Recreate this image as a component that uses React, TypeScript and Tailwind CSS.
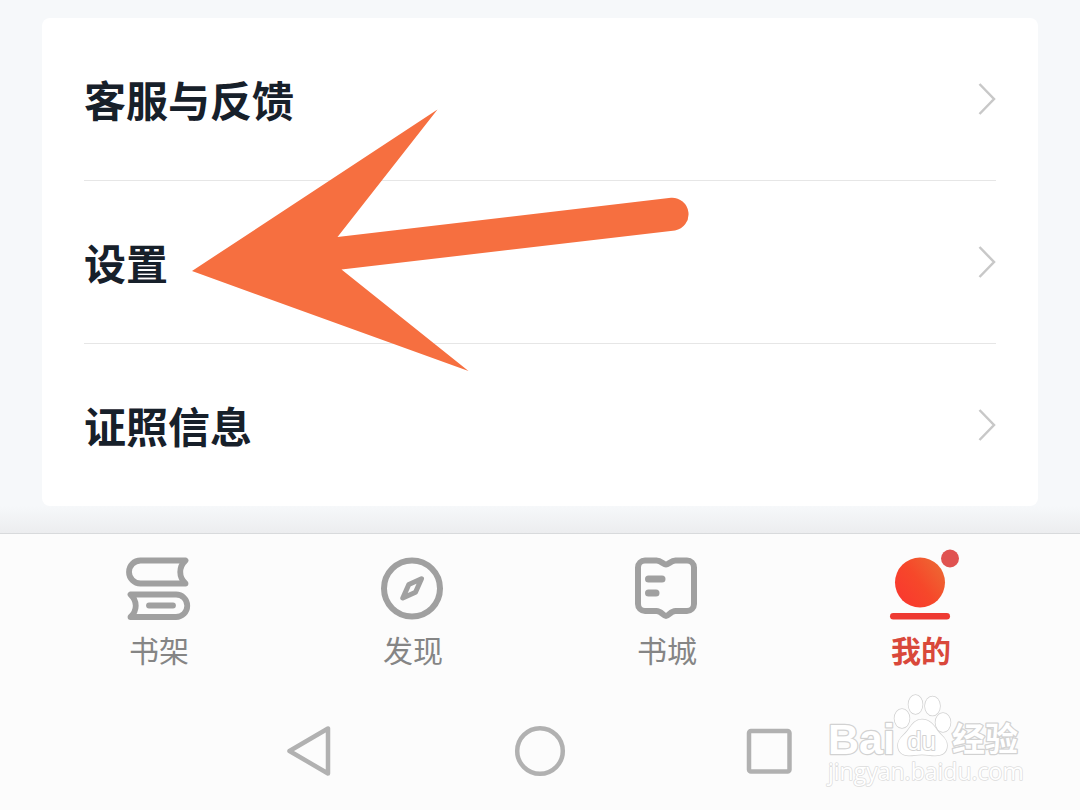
import type { ReactNode } from "react";

const menuItems = ["客服与反馈", "设置", "证照信息"];

const ShelfIcon = () => (
  <svg viewBox="0 0 96 76" className="w-24 h-[76px]" fill="none" stroke="#a0a0a0" strokeWidth="5.8" strokeLinejoin="round" strokeLinecap="round" aria-hidden="true">
    <path d="M74.5 14.5H29.5a11.5 11.5 0 0 0 0 23h45c-7-6.5-7-16.5 0-23Z" />
    <path d="M19.5 48.500h45.500a11.250 11.250 0 0 1 0 22.500h-45.500c7-6.500 7-16 0-22.500Z" />
    <path d="M38 59.500h24" />
  </svg>
);

const CompassIcon = () => (
  <svg viewBox="0 0 96 76" className="w-24 h-[76px]" fill="none" stroke="#a0a0a0" strokeLinejoin="round" aria-hidden="true">
    <circle cx="47" cy="42.5" r="28" strokeWidth="6" />
    <path d="M56.5 32.800 43.800 38.500 37.800 52 50.500 46.300Z" strokeWidth="5" />
  </svg>
);

const StoreIcon = () => (
  <svg viewBox="0 0 96 76" className="w-24 h-[76px]" fill="none" stroke="#a0a0a0" strokeWidth="6" strokeLinejoin="round" strokeLinecap="round" aria-hidden="true">
    <path d="M26 14.5h11.5c4.500 0 7 4 9.500 4s5-4 9.500-4H68a7 7 0 0 1 7 7V58a7 7 0 0 1-7 7H56.500c-4.500 0-7 5-9.500 5s-5-5-9.500-5H26a7 7 0 0 1-7-7V21.500a7 7 0 0 1 7-7Z" />
    <path d="M29.5 33H43M29.5 47h7.500" strokeWidth="7" />
  </svg>
);

const MineIcon = () => (
  <svg viewBox="0 0 96 76" className="w-24 h-[76px]" aria-hidden="true">
    <defs>
      <linearGradient id="ball" x1="0.1" y1="0.8" x2="0.9" y2="0.2">
        <stop offset="0" stopColor="#f93a2e" />
        <stop offset="0.5" stopColor="#f6482a" />
        <stop offset="1" stopColor="#ee6432" />
      </linearGradient>
    </defs>
    <circle cx="47" cy="36.5" r="25" fill="url(#ball)" />
    <rect x="17" y="67" width="60" height="6.5" rx="3.250" fill="#ee3a32" />
    <circle cx="77" cy="12.5" r="9" fill="#e05250" />
  </svg>
);

const tabs: { label: string; icon: ReactNode; active?: boolean }[] = [
  { label: "书架", icon: <ShelfIcon /> },
  { label: "发现", icon: <CompassIcon /> },
  { label: "书城", icon: <StoreIcon /> },
  { label: "我的", icon: <MineIcon />, active: true },
];

const Arrow = () => (
  <svg viewBox="192 109 498 263" className="absolute left-[150px] top-[91px] w-[498px] h-[263px] pointer-events-none" aria-hidden="true">
    <path
      d="M192 271 437.5 109.5 337.5 237 671 197.8A16.500 16.500 0 0 1 675 230.5L341.5 269.5 468.5 371Z"
      fill="#f66f40"
    />
  </svg>
);

const Watermark = () => (
  <svg
    viewBox="820 690 210 100"
    className="absolute right-[50px] bottom-5 w-[210px] h-[100px] pointer-events-none"
    fill="#ffffff"
    stroke="#d2d2d2"
    strokeWidth="2.5"
    paintOrder="stroke"
    strokeLinejoin="round"
    aria-hidden="true"
  >
    <text x="828" y="754" fontSize="43" fontWeight="700" fontFamily="'Liberation Sans', sans-serif">Bai</text>
    <g strokeWidth="1.5">
      <ellipse cx="902" cy="718.5" rx="7.5" ry="9.5" />
      <ellipse cx="915.5" cy="704.5" rx="7" ry="9.5" />
      <ellipse cx="932.5" cy="706" rx="7.5" ry="9.5" />
      <ellipse cx="943" cy="722.5" rx="7.5" ry="9.5" />
      <path d="M922 719.500c8 0 12 6 16 12 4 5 9 7 9 14s-5 10-12 10c-5 0-8-1-13-1s-8 1-13 1c-7 0-11-4-11-10 0-7 5-9 9-14s7-12 15-12Z" />
    </g>
    <text x="907" y="750" fontSize="26" strokeWidth="2" fontFamily="'Liberation Sans', sans-serif">du</text>
    <text x="952" y="751" fontSize="33" fontWeight="700" fontFamily="'Noto Sans CJK SC', sans-serif">经验</text>
    <text x="828" y="780" fontSize="23" strokeWidth="1.5" stroke="#dcdcdc" fontFamily="'Open Sans', sans-serif">jingyan.baidu.com</text>
  </svg>
);

export default function App() {
  return (
    <div className="min-h-screen flex flex-col bg-[#f6f8fa] font-['Noto_Sans_CJK_SC',sans-serif]">
      <main className="flex-1 flex flex-col pt-[18px]">
        <div className="relative mx-[42px] px-[42px] rounded-lg bg-white">
          {menuItems.map((item) => (
            <button
              key={item}
              type="button"
              className="flex w-full h-[163px] items-center justify-between border-b border-[#e6e6e6] last-of-type:h-[162px] last-of-type:border-b-0 text-left"
            >
              <span className="text-[42px] leading-[60px] font-bold text-[#17202a]">{item}</span>
              <svg viewBox="0 0 18 34" className="w-[18px] h-[34px]" fill="none" stroke="#c8c8c8" strokeWidth="2.5" aria-hidden="true">
                <path d="M1.5 2 16 17 1.5 32" />
              </svg>
            </button>
          ))}
          <Arrow />
        </div>
        <div className="flex-1 min-h-6 bg-linear-to-b from-[#f6f8fa] to-[#ecedef]" />
      </main>

      <footer className="relative border-t border-[#d8dadc] bg-[#fcfcfc]">
        <nav className="grid grid-cols-4 px-8 pt-3">
          {tabs.map((tab) => (
            <a key={tab.label} href="#" className="flex flex-col items-center gap-[7px]">
              {tab.icon}
              <span className={tab.active ? "text-[30px] leading-10 font-bold text-[#d9483b]" : "text-[30px] leading-10 text-[#858585]"}>
                {tab.label}
              </span>
            </a>
          ))}
        </nav>

        <div className="flex justify-center gap-44 pt-[55px] pb-8">
          <button type="button" aria-label="返回">
            <svg viewBox="0 0 54 54" className="w-[54px] h-[54px]" fill="none" stroke="#b1b1b1" strokeWidth="4.5" strokeLinejoin="round">
              <path d="M6.5 27 45 4.500v45Z" />
            </svg>
          </button>
          <button type="button" aria-label="主页">
            <svg viewBox="0 0 54 54" className="w-[54px] h-[54px]" fill="none" stroke="#b1b1b1" strokeWidth="4.5">
              <circle cx="27" cy="27" r="22.8" />
            </svg>
          </button>
          <button type="button" aria-label="最近任务">
            <svg viewBox="0 0 54 54" className="w-[54px] h-[54px]" fill="none" stroke="#b1b1b1" strokeWidth="4.5">
              <rect x="6" y="7" width="40.5" height="40.5" rx="2" />
            </svg>
          </button>
        </div>

        <Watermark />
      </footer>
    </div>
  );
}
